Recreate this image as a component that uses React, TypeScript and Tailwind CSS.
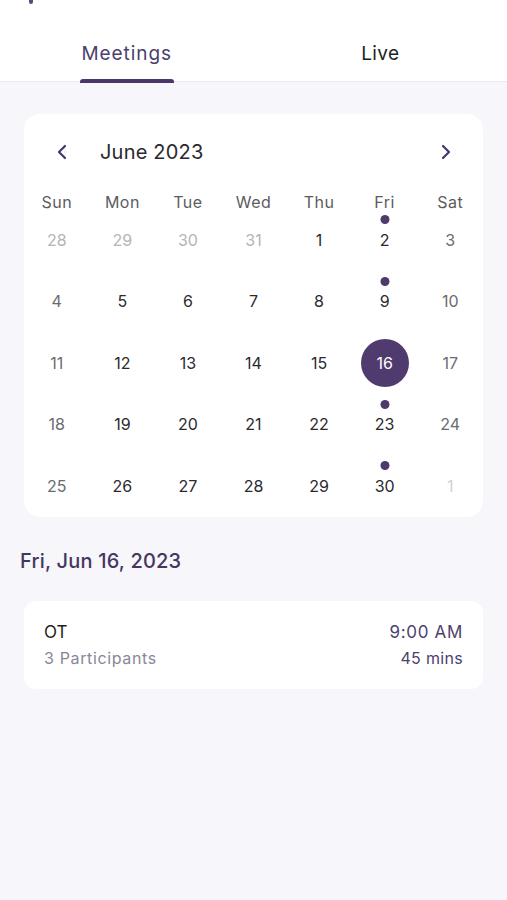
import React from "react";
import { ChevronLeft, ChevronRight } from "lucide-react";

type Day = {
  n: number;
  muted?: "prev" | "next";
  weekend?: boolean;
  dot?: boolean;
  selected?: boolean;
};

const weekDays = ["Sun", "Mon", "Tue", "Wed", "Thu", "Fri", "Sat"];

function buildWeeks(): Day[][] {
  const dots = [2, 9, 23, 30];
  const cells: Day[] = [];
  [28, 29, 30, 31].forEach((n) => cells.push({ n, muted: "prev" }));
  for (let n = 1; n <= 30; n++) {
    const col = cells.length % 7;
    cells.push({
      n,
      weekend: col === 0 || col === 6,
      dot: dots.includes(n),
      selected: n === 16,
    });
  }
  cells.push({ n: 1, muted: "next" });
  const weeks: Day[][] = [];
  for (let i = 0; i < cells.length; i += 7) weeks.push(cells.slice(i, i + 7));
  return weeks;
}

function DayCell({ day }: { day: Day }) {
  let color = "text-[#2a2a2e]";
  if (day.muted === "prev") color = "text-[#b4b4b8]";
  else if (day.muted === "next") color = "text-[#d2d2d6]";
  else if (day.weekend) color = "text-[#6b6b70]";

  return (
    <div className="relative flex h-[61.5px] items-center justify-center">
      {day.dot && (
        <span className="absolute left-1/2 top-[6px] h-[9px] w-[9px] -translate-x-1/2 rounded-full bg-[#4e3a6d]" />
      )}
      {day.selected ? (
        <span className="flex h-[48px] w-[48px] items-center justify-center rounded-full bg-[#503b6f] text-[16px] text-white">
          {day.n}
        </span>
      ) : (
        <span className={`text-[16px] ${color}`}>{day.n}</span>
      )}
    </div>
  );
}

function Calendar() {
  const weeks = buildWeeks();
  return (
    <section className="rounded-[16px] bg-white pt-[18px]">
      <div className="flex h-[40px] items-center pl-[26px] pr-[25px]">
        <ChevronLeft size={24} strokeWidth={2.2} className="text-[#45366d]" />
        <span className="ml-[26px] text-[20px] tracking-[0.01em] text-[#2a2a2e]">
          June 2023
        </span>
        <ChevronRight
          size={24}
          strokeWidth={2.2}
          className="ml-auto text-[#45366d]"
        />
      </div>
      <div className="mt-[23px] grid h-[14px] grid-cols-7 items-center">
        {weekDays.map((d) => (
          <span
            key={d}
            className="text-center text-[16px] leading-[14px] tracking-[0.03em] text-[#5c5c60]"
          >
            {d}
          </span>
        ))}
      </div>
      <div className="grid grid-cols-7">
        {weeks.flat().map((d, i) => (
          <DayCell key={i} day={d} />
        ))}
      </div>
    </section>
  );
}

function MeetingCard() {
  return (
    <div className="flex items-center justify-between rounded-[12px] bg-white px-[20px] py-[20px]">
      <div className="flex flex-col gap-[4px]">
        <span className="text-[17px] leading-[22px] text-[#1e1e22]">OT</span>
        <span className="text-[16px] leading-[22px] tracking-[0.04em] text-[#8a8699]">
          3 Participants
        </span>
      </div>
      <div className="flex flex-col items-end gap-[4px]">
        <span className="text-[17px] leading-[22px] tracking-[0.04em] text-[#4e3f6e]">
          9:00 AM
        </span>
        <span className="text-[16px] leading-[22px] tracking-[0.02em] text-[#4e3f6e]">
          45 mins
        </span>
      </div>
    </div>
  );
}

export default function App() {
  return (
    <div
      className="min-h-[900px] w-full bg-[#f7f6fb]"
      style={{ fontFamily: 'Inter, "Liberation Sans", sans-serif' }}
    >
      <header className="border-b border-[#ebeaf0] bg-white">
        <div className="h-[5px] pl-[29px]">
          <span className="block h-[4px] w-[4px] rounded-b-full bg-[#5a4b86]" />
        </div>
        <nav className="grid grid-cols-2 pt-[36px]">
          <div className="flex flex-col items-center">
            <span className="text-[19px] leading-[26px] tracking-[0.05em] text-[#4b3f6c]">
              Meetings
            </span>
            <span className="mb-[-2px] mt-[12px] h-[4px] w-[94px] rounded-t-[3px] bg-[#4a3769]" />
          </div>
          <div className="flex flex-col items-center">
            <span className="text-[19px] leading-[26px] tracking-[0.02em] text-[#1e1e22]">
              Live
            </span>
            <span className="mt-[12px] h-[2px]" />
          </div>
        </nav>
      </header>

      <main className="px-[24px] pt-[32px]">
        <Calendar />
        <h2 className="-ml-[4px] mt-[30px] text-[20px] font-medium leading-[28px] tracking-[0.01em] text-[#45365f]">
          Fri, Jun 16, 2023
        </h2>
        <div className="mt-[26px]">
          <MeetingCard />
        </div>
      </main>
    </div>
  );
}
